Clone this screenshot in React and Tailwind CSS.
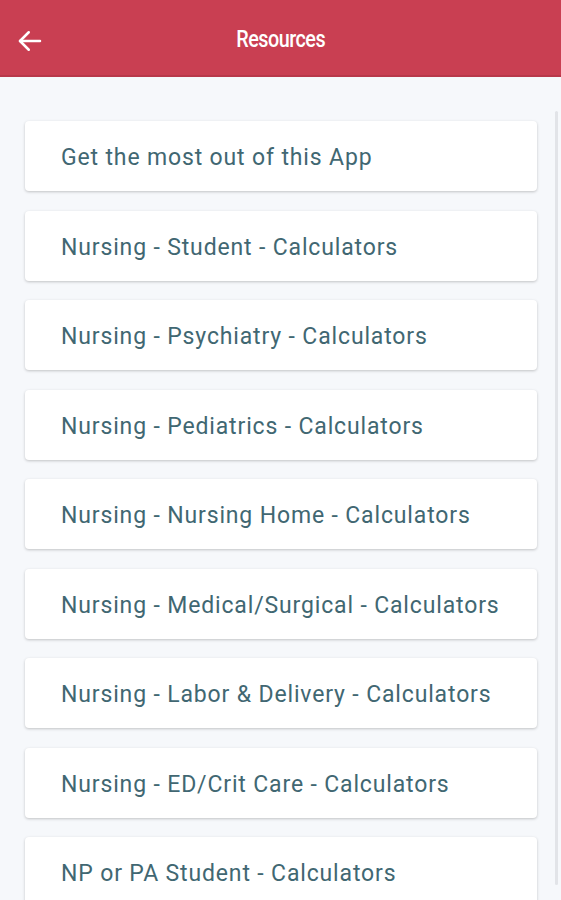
import React from 'react';

const items = [
  'Get the most out of this App',
  'Nursing - Student - Calculators',
  'Nursing - Psychiatry - Calculators',
  'Nursing - Pediatrics - Calculators',
  'Nursing - Nursing Home - Calculators',
  'Nursing - Medical/Surgical - Calculators',
  'Nursing - Labor & Delivery - Calculators',
  'Nursing - ED/Crit Care - Calculators',
  'NP or PA Student - Calculators',
];

const BackArrow = () => (
  <svg width="30" height="30" viewBox="0 0 24 24" fill="none" stroke="white" strokeWidth="2" strokeLinecap="round" strokeLinejoin="round">
    <path d="M20 12H4" />
    <path d="M11 5l-7 7 7 7" />
  </svg>
);

export default function App() {
  return (
    <div className="relative w-[561px] h-[900px] overflow-hidden bg-[#f6f8fb]" style={{ fontFamily: 'Roboto, "Noto Sans", sans-serif' }}>
      <header className="relative h-[77px] bg-[#c93f52] flex items-center justify-center border-b-[2px] border-[#b8384a]">
        <button className="absolute left-[15px] top-[26px]">
          <BackArrow />
        </button>
        <h1 className="text-white text-[23px] font-medium tracking-tight scale-x-[0.86] pt-[6px]">Resources</h1>
      </header>

      <div className="absolute right-[3px] top-[111px] w-[3px] h-[774px] bg-[#e2e4e8] rounded-full" />

      <main className="pt-[44px] pl-[25px] flex flex-col gap-[19.5px]">
        {items.map((label) => (
          <div
            key={label}
            className="w-[512px] h-[70px] bg-white rounded-[4px] shadow-[0_1px_3px_rgba(0,0,0,0.22)] flex items-center pl-[36px]"
          >
            <span className="text-[23px] tracking-[0.85px] text-[#416772] pt-[5px]">{label}</span>
          </div>
        ))}
      </main>
    </div>
  );
}
